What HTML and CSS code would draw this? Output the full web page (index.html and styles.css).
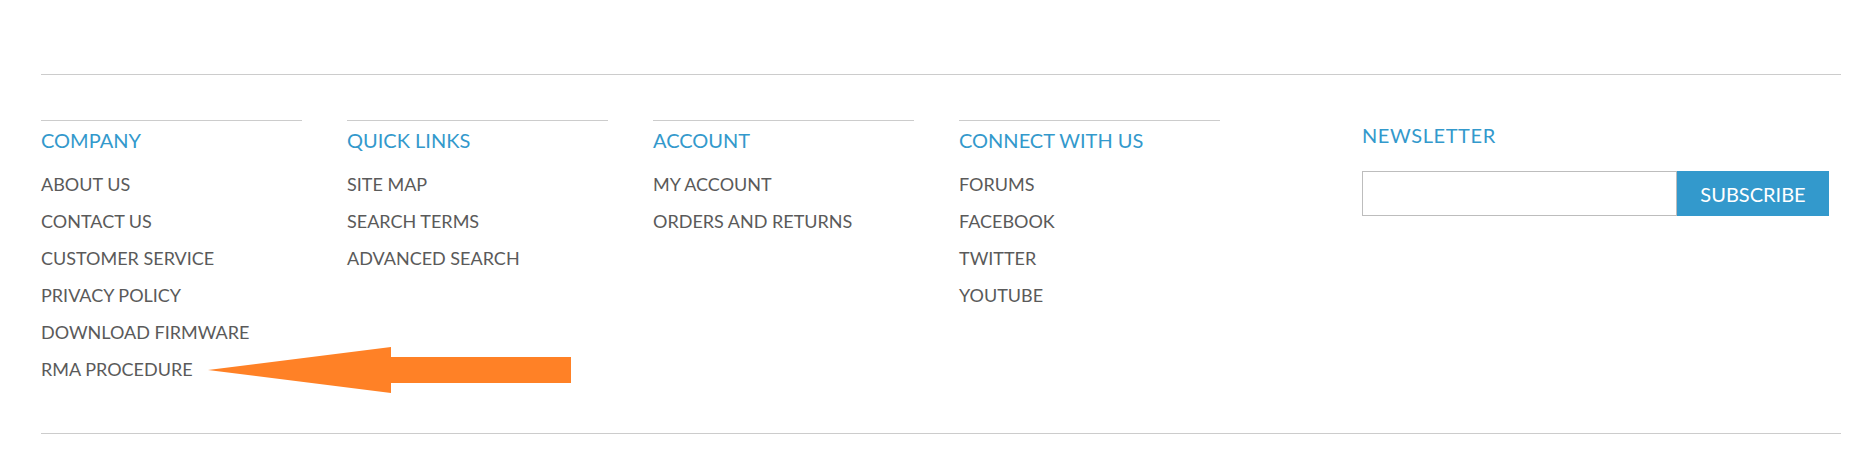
FILE: index.html
```html
<!DOCTYPE html>
<html lang="en">
<head>
<meta charset="utf-8">
<title>Footer</title>
<link rel="stylesheet" href="styles.css">
</head>
<body>
<footer class="footer">
  <hr class="rule rule-top">
  <div class="footer-main">
    <div class="link-cols">
      <div class="col">
        <h3 class="col-title">COMPANY</h3>
        <ul class="links">
          <li><a href="#">ABOUT US</a></li>
          <li><a href="#">CONTACT US</a></li>
          <li><a href="#">CUSTOMER SERVICE</a></li>
          <li><a href="#">PRIVACY POLICY</a></li>
          <li><a href="#">DOWNLOAD FIRMWARE</a></li>
          <li><a href="#">RMA PROCEDURE</a></li>
        </ul>
      </div>
      <div class="col">
        <h3 class="col-title">QUICK LINKS</h3>
        <ul class="links">
          <li><a href="#">SITE MAP</a></li>
          <li><a href="#">SEARCH TERMS</a></li>
          <li><a href="#">ADVANCED SEARCH</a></li>
        </ul>
      </div>
      <div class="col">
        <h3 class="col-title">ACCOUNT</h3>
        <ul class="links">
          <li><a href="#">MY ACCOUNT</a></li>
          <li><a href="#">ORDERS AND RETURNS</a></li>
        </ul>
      </div>
      <div class="col">
        <h3 class="col-title">CONNECT WITH US</h3>
        <ul class="links">
          <li><a href="#">FORUMS</a></li>
          <li><a href="#">FACEBOOK</a></li>
          <li><a href="#">TWITTER</a></li>
          <li><a href="#">YOUTUBE</a></li>
        </ul>
      </div>
    </div>
    <div class="newsletter">
      <h3 class="col-title newsletter-title">NEWSLETTER</h3>
      <form class="subscribe-form">
        <input class="email" type="email" aria-label="Email">
        <button class="subscribe-btn" type="button">SUBSCRIBE</button>
      </form>
    </div>
  </div>
  <hr class="rule rule-bottom">
  <svg class="arrow" width="366" height="48" viewBox="0 0 366 48" aria-hidden="true">
    <polygon points="1,24 184,1 184,11 364,11 364,37 184,37 184,47" fill="#ff8126"/>
  </svg>
</footer>
</body>
</html>
```
FILE: styles.css
```css
* { box-sizing: border-box; }
html, body { margin: 0; padding: 0; background: #fff; }
body {
  font-family: "Lato", "Liberation Sans", sans-serif;
  color: #555;
  width: 1869px;
  height: 471px;
  overflow: hidden;
}
.footer {
  position: relative;
  padding: 74px 0 0 41px;
  width: 1841px;
}
.rule {
  margin: 0;
  border: 0;
  border-top: 1px solid #cccccc;
  height: 0;
}
.footer-main {
  display: flex;
  margin-top: 45px;
}
.link-cols {
  display: flex;
  gap: 45px;
}
.col {
  width: 261px;
  border-top: 1px solid #cccccc;
}
.col-title {
  margin: 0;
  padding-top: 7px;
  font-size: 20px;
  line-height: 24px;
  font-weight: 400;
  color: #3399cc;
}
.links {
  list-style: none;
  margin: 14px 0 0;
  padding: 0;
}
.links li {
  font-size: 18px;
  line-height: 37px;
}
.links a {
  color: #5a5a5a;
  text-decoration: none;
}
.newsletter {
  margin-left: 142px;
}
.newsletter-title {
  padding-top: 3px;
  letter-spacing: 0.6px;
}
.subscribe-form {
  display: flex;
  margin-top: 24px;
}
.email {
  width: 315px;
  height: 45px;
  border: 1px solid #bdbdbd;
  margin: 0;
  padding: 0 10px;
  font: inherit;
}
.subscribe-btn {
  width: 152px;
  height: 45px;
  border: 0;
  margin: 0;
  background: #3399cc;
  color: #fff;
  font-family: inherit;
  font-size: 20px;
  padding: 0;
}
.rule-bottom {
  margin-top: 45px;
}
.arrow {
  position: absolute;
  left: 207px;
  top: 346px;
}
```
